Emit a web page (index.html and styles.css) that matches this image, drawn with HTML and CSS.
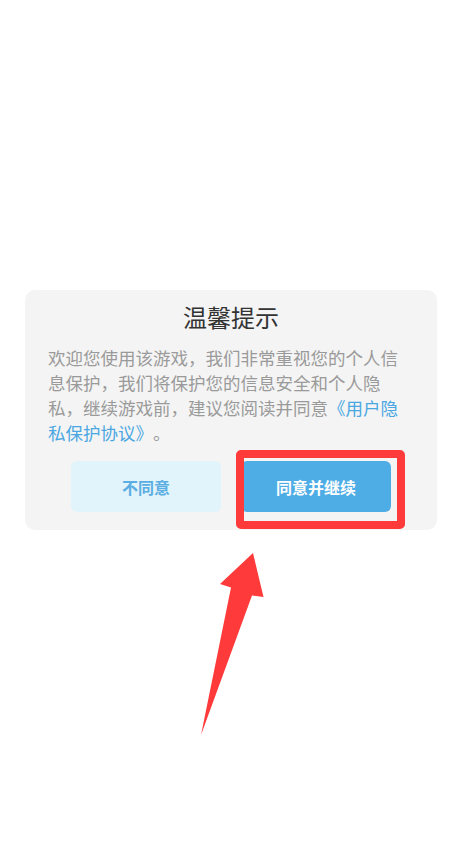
FILE: index.html
```html
<!DOCTYPE html>
<html lang="zh-CN">
<head>
<meta charset="utf-8">
<title>温馨提示</title>
<link rel="stylesheet" href="styles.css">
</head>
<body>
<div class="page">
  <div class="card">
    <h1 class="title">温馨提示</h1>
    <p class="body">欢迎您使用该游戏，我们非常重视您的个人信息保护，我们将保护您的信息安全和个人隐私，继续游戏前，建议您阅读并同意<span class="link">《用户隐私保护协议》</span>。</p>
    <div class="actions">
      <button class="btn btn-light">不同意</button>
      <div class="btn-wrap">
        <button class="btn btn-primary">同意并继续</button>
        <div class="highlight"></div>
      </div>
    </div>
  </div>
  <svg class="arrow" width="464" height="846" viewBox="0 0 464 846">
    <polygon points="253,553 263.5,597 252,595.5 201,735 231,587.5 220,584" fill="#ff3a3a"/>
  </svg>
</div>
</body>
</html>
```
FILE: styles.css
```css
html, body {
  margin: 0;
  padding: 0;
  background: #ffffff;
}
body {
  font-family: "Noto Sans CJK SC", "Noto Sans", sans-serif;
}
.page {
  position: relative;
  width: 464px;
  height: 846px;
  padding: 290px 0 0 25px;
  box-sizing: border-box;
}
.card {
  width: 412px;
  height: 240px;
  box-sizing: border-box;
  background: #f4f4f4;
  border-radius: 10px;
  padding: 10px 0 0 23px;
}
.title {
  margin: 0;
  width: 366px;
  font-size: 24px;
  line-height: 34px;
  font-weight: normal;
  color: #333333;
  text-align: center;
}
.body {
  margin: 10.5px 0 0 0;
  width: 360px;
  font-size: 17.5px;
  line-height: 25px;
  color: #9a9a9a;
  text-spacing-trim: space-all;
}
.link {
  color: #4aa7e2;
}
.actions {
  display: flex;
  gap: 20px;
  margin: 16.5px 0 0 23px;
}
.btn {
  display: block;
  width: 150px;
  height: 51px;
  border: none;
  border-radius: 6px;
  font-family: "Noto Sans CJK SC", "Noto Sans", sans-serif;
  font-size: 16px;
  font-weight: bold;
  padding: 0;
}
.btn-light {
  background: #e1f3fb;
  color: #5aaee2;
}
.btn-wrap {
  position: relative;
}
.btn-primary {
  background: #4fade6;
  color: #ffffff;
}
.highlight {
  position: absolute;
  left: -5px;
  top: -11px;
  right: -14px;
  bottom: -17px;
  border: 8.5px solid #ff3a3a;
  border-radius: 5px;
}
.arrow {
  position: absolute;
  left: 0;
  top: 0;
}
```
